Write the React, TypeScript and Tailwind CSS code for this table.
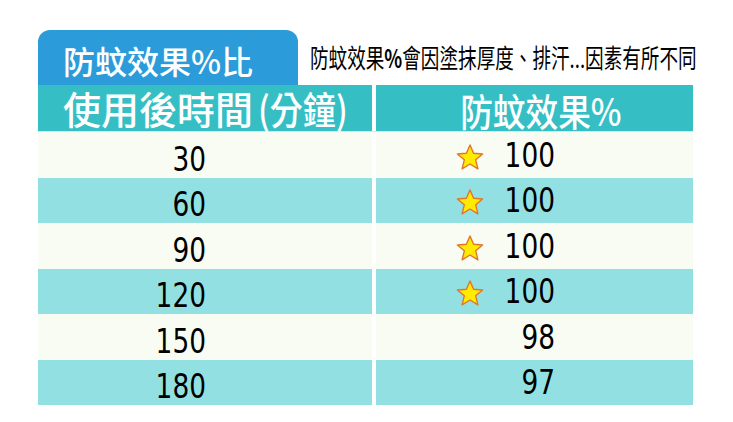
const rows = [
  { minutes: "30", effect: "100", star: true },
  { minutes: "60", effect: "100", star: true },
  { minutes: "90", effect: "100", star: true },
  { minutes: "120", effect: "100", star: true },
  { minutes: "150", effect: "98", star: false },
  { minutes: "180", effect: "97", star: false },
];

const cjk = "font-['Noto_Sans_CJK_TC','Noto_Sans_CJK_SC',sans-serif]";
const num = "font-['DejaVu_Sans',Verdana,sans-serif]";

function Star() {
  return (
    <svg width="28" height="27" viewBox="0 0 28 27" className="shrink-0">
      <path
        d="M14 1 L17.6 9.3 L26.6 10 L19.7 15.8 L21.9 24.8 L14 20 L6.1 24.8 L8.3 15.8 L1.4 10 L10.4 9.3 Z"
        fill="#ffea00"
        stroke="#e0762c"
        strokeWidth="1.4"
        strokeLinejoin="round"
      />
    </svg>
  );
}

export default function App() {
  return (
    <div className="h-[422px] w-[733px] overflow-hidden bg-white pl-[38px] pt-[30px]">
      <div className="flex h-[55px] items-end">
        <div
          className={`flex h-[55px] w-[260px] shrink-0 items-center rounded-t-[12px] bg-[#2b9bd9] pl-[25px] pt-[4px] text-[32px] font-medium leading-none text-white ${cjk}`}
        >
          防蚊效果%比
        </div>
        <div className="ml-[12px] pb-[11px]">
          <span
            className={`inline-block origin-left scale-x-[0.715] whitespace-nowrap text-[26px] leading-none text-black ${cjk}`}
          >
            防蚊效果<span className="font-bold">%</span>會因塗抹厚度、排汗...因素有所不同
          </span>
        </div>
      </div>

      <div className={`grid h-[46px] w-[655px] grid-cols-[334px_317px] gap-x-[4px] text-white ${cjk}`}>
        <div className="flex items-center bg-[#35bfc5] pl-[25px] text-[38px] font-medium leading-none">
          使用後時間
          <span className="ml-[5px] inline-block origin-left scale-x-[0.87] whitespace-nowrap">(分鐘)</span>
        </div>
        <div className="flex items-center justify-center bg-[#35bfc5] pl-[12px] pt-[4px] text-[38px] font-medium leading-none">
          <span className="inline-block scale-x-[0.86]">防蚊效果%</span>
        </div>
      </div>

      <div className="w-[655px] border-t border-[#c6eef0]">
        {rows.map((r, i) => {
          const teal = i % 2 === 1;
          const bg = teal ? "bg-[#93e0e3]" : "bg-[#f8fcf3]";
          const h = i % 2 === 0 ? "h-[46px]" : "h-[45px]";
          return (
            <div key={r.minutes} className={`grid ${h} grid-cols-[334px_317px] gap-x-[4px] ${num}`}>
              <div className={`flex items-center ${bg}`}>
                <div className="w-[168px] pt-[10px] text-right">
                  <span className="inline-block origin-right scale-x-[0.8] text-[33px] leading-none text-black">
                    {r.minutes}
                  </span>
                </div>
              </div>
              <div className={`flex items-center ${bg} pl-[80px]`}>
                <div className="flex w-[28px] shrink-0 pt-[4px]">{r.star && <Star />}</div>
                <div className="w-[71px] pt-[2px] text-right">
                  <span className="inline-block origin-right scale-x-[0.8] text-[33px] leading-none text-black">
                    {r.effect}
                  </span>
                </div>
              </div>
            </div>
          );
        })}
      </div>
    </div>
  );
}
